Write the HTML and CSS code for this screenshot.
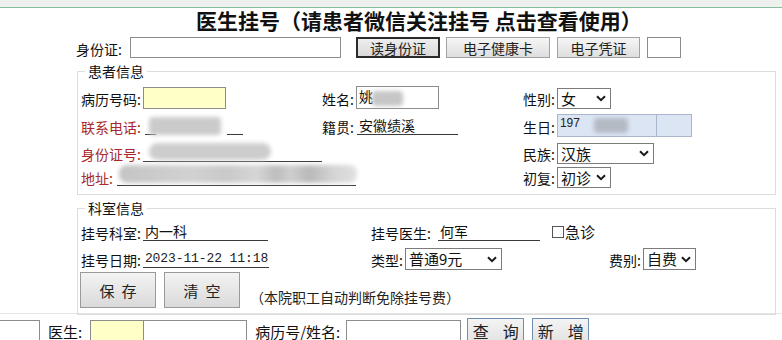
FILE: index.html
```html
<!DOCTYPE html>
<html lang="zh-CN">
<head>
<meta charset="utf-8">
<title>医生挂号</title>
<link rel="stylesheet" href="styles.css">
</head>
<body>
<div class="topbar"></div>
<div class="frame">
  <h1 class="title">医生挂号（请患者微信关注挂号 点击查看使用）</h1>
  <div class="idrow">
    <span class="lbl">身份证:</span>
    <span class="inp id-inp"></span>
    <span class="btn btn-pressed">读身份证</span>
    <span class="btn btn-health">电子健康卡</span>
    <span class="btn btn-cert">电子凭证</span>
    <span class="inp small-box"></span>
  </div>

  <fieldset class="fs fs-patient">
    <legend>患者信息</legend>
    <div class="row r1">
      <div class="col c1"><span class="lbl">病历号码:</span><span class="inp yellow mrn"></span></div>
      <div class="col c2"><span class="lbl">姓名:</span><span class="inp name-inp">姚<i class="blur b-name"></i></span></div>
      <div class="col c3"><span class="lbl">性别:</span><span class="sel sel-sex">女<svg class="chev" viewBox="0 0 10 7" width="10" height="7"><path d="M1 1.2 L5 5.2 L9 1.2" /></svg></span></div>
    </div>
    <div class="row r2">
      <div class="col c1"><span class="lbl red">联系电话:</span><span class="phone"><span class="seg s1"></span><span class="seg s2"></span><i class="blur b-phone"></i></span></div>
      <div class="col c2"><span class="lbl">籍贯:</span><span class="uf native">安徽绩溪</span></div>
      <div class="col c3"><span class="lbl">生日:</span><span class="bday"><span class="bday-a">197<i class="blur b-bday"></i></span><span class="bday-b"></span></span></div>
    </div>
    <div class="row r3">
      <div class="col c1"><span class="lbl red">身份证号:</span><span class="uf idno"><i class="blur b-id"></i></span></div>
      <div class="col c2"></div>
      <div class="col c3"><span class="lbl">民族:</span><span class="sel sel-nation">汉族<svg class="chev" viewBox="0 0 10 7" width="10" height="7"><path d="M1 1.2 L5 5.2 L9 1.2" /></svg></span></div>
    </div>
    <div class="row r4">
      <div class="col c1 addr-col"><span class="lbl red">地址:</span><span class="uf addr"><i class="blur b-addr"></i></span></div>
      <div class="col c3"><span class="lbl">初复:</span><span class="sel sel-visit">初诊<svg class="chev" viewBox="0 0 10 7" width="10" height="7"><path d="M1 1.2 L5 5.2 L9 1.2" /></svg></span></div>
    </div>
  </fieldset>

  <fieldset class="fs fs-dept">
    <legend>科室信息</legend>
    <div class="row d1">
      <div class="col k1"><span class="lbl">挂号科室:</span><span class="uf dept">内一科</span></div>
      <div class="col k2"><span class="lbl">挂号医生:</span><span class="uf doctor">何军</span><span class="check"><span class="box"></span>急诊</span></div>
    </div>
    <div class="row d2">
      <div class="col k1"><span class="lbl">挂号日期:</span><span class="uf date">2023-11-22 11:18</span></div>
      <div class="col k2"><span class="lbl">类型:</span><span class="sel sel-type">普通9元<svg class="chev" viewBox="0 0 10 7" width="10" height="7"><path d="M1 1.2 L5 5.2 L9 1.2" /></svg></span></div>
      <div class="col k3"><span class="lbl">费别:</span><span class="sel sel-fee">自费<svg class="chev" viewBox="0 0 10 7" width="10" height="7"><path d="M1 1.2 L5 5.2 L9 1.2" /></svg></span></div>
    </div>
    <div class="row d3">
      <span class="bigbtn"><span>保</span><span>存</span></span>
      <span class="bigbtn"><span>清</span><span>空</span></span>
      <span class="note">（本院职工自动判断免除挂号费）</span>
    </div>
  </fieldset>
</div>

<div class="bottom">
  <span class="inp edge-box"></span>
  <span class="blbl doc-lbl">医生:</span>
  <span class="inp yellow doc-a"></span>
  <span class="inp doc-b"></span>
  <span class="blbl search-lbl">病历号/姓名:</span>
  <span class="inp search-inp"></span>
  <span class="qbtn"><span>查</span><span>询</span></span>
  <span class="qbtn"><span>新</span><span>增</span></span>
</div>
</body>
</html>
```

FILE: styles.css
```css
* { box-sizing: border-box; }

body {
  margin: 0;
  width: 782px;
  height: 340px;
  overflow: hidden;
  background: #fff;
  color: #111;
  font-family: "Noto Sans CJK SC", "Noto Sans", sans-serif;
  font-size: 14px;
}

.topbar {
  height: 8px;
  background: #eef0ee;
  border-bottom: 1px solid #86bea0;
}

.frame {
  height: 306px;
  border-bottom: 1px solid #e4e4e4;
}

.title {
  margin: 0;
  height: 28px;
  line-height: 24px;
  padding-left: 196px;
  font-size: 21px;
  font-weight: 700;
  color: #111;
  white-space: nowrap;
}

.lbl {
  line-height: 18px;
  white-space: nowrap;
}
.red { color: #a8282c; }

.inp {
  display: inline-block;
  height: 21px;
  border: 1px solid #8c8c8c;
  background: #fff;
}
.yellow { background: #ffffc8; }

/* ID row */
.idrow {
  display: flex;
  align-items: flex-end;
  height: 22px;
  padding-left: 76px;
}
.id-inp { width: 211px; margin-left: 8px; }
.btn {
  display: inline-flex;
  align-items: center;
  justify-content: center;
  height: 21px;
  border: 1px solid #a2a2a2;
  background: linear-gradient(#f6f6f6, #dedede);
  line-height: 18px;
  color: #222;
}
.btn-pressed {
  width: 84px;
  margin-left: 15px;
  border: 2px solid #2a2a2a;
  background: linear-gradient(#eeeeee, #dadada);
}
.btn-health { width: 104px; margin-left: 6px; }
.btn-cert { width: 83px; margin-left: 7px; }
.small-box { width: 34px; margin-left: 7px; }

/* fieldsets */
.fs {
  margin: 5px 0 0 77px;
  width: 699px;
  min-width: 0;
  border: 1px solid #dcdcdc;
  padding: 0 3px 6px 3px;
}
.fs legend {
  margin-left: 4px;
  padding: 0 3px;
  line-height: 16px;
  font-size: 14px;
  color: #111;
}

.row {
  display: flex;
  align-items: flex-end;
  height: 22px;
}
.col {
  display: flex;
  align-items: flex-end;
  flex: none;
}
.c1 { width: 241px; }
.c2 { width: 201px; }
.c3 { flex: 1; }

.r1 { margin-top: 8px; }
.r2 { margin-top: 5px; height: 23px; }
.r3 { margin-top: 5px; }
.r4 { margin-top: 2px; }
.addr-col { width: 442px; }

.fs-patient .lbl { margin-bottom: 1px; }

.mrn { width: 83px; height: 22px; margin-left: 2px; }
.name-inp {
  position: relative;
  width: 83px;
  height: 23px;
  margin-left: 2px;
  padding-left: 2px;
  line-height: 19px;
  font-size: 14px;
}

.sel {
  display: inline-flex;
  align-items: center;
  justify-content: space-between;
  height: 21px;
  border: 1px solid #7c7c7c;
  background: #fff;
  padding: 0 4px 0 3px;
  line-height: 18px;
  font-size: 15px;
  margin-left: 2px;
}
.chev { flex: none; }
.chev path {
  fill: none;
  stroke: #1a1a1a;
  stroke-width: 2;
}
.sel-sex { width: 54px; }
.sel-nation { width: 97px; }
.sel-visit { width: 54px; }
.sel-type { width: 97px; height: 22px; }
.sel-fee { width: 53px; height: 22px; }

.uf {
  display: inline-block;
  position: relative;
  height: 18px;
  line-height: 17px;
  border-bottom: 1px solid #3a3a3a;
  margin-bottom: 2px;
  margin-left: 2px;
  padding-left: 2px;
  white-space: nowrap;
}

.phone {
  position: relative;
  display: flex;
  align-items: flex-end;
  width: 100px;
  height: 18px;
  margin-left: 2px;
  margin-bottom: 2px;
}
.seg { display: block; height: 1px; background: #3a3a3a; }
.s1 { width: 11px; margin-left: 2px; }
.s2 { width: 16px; margin-left: 71px; }

.native { width: 101px; margin-left: 3px; }

.bday {
  display: flex;
  height: 23px;
  margin-left: 2px;
}
.bday-a, .bday-b {
  display: block;
  position: relative;
  height: 23px;
  background: #dbe5f4;
  border: 1px solid #a9b6cb;
}
.bday-a {
  width: 100px;
  padding: 1px 0 0 2px;
  font-family: "Liberation Sans", Arial, sans-serif;
  font-size: 12px;
  line-height: 14px;
  color: #222;
}
.bday-b { width: 35px; border-left: none; }

.idno { width: 239px; }
.addr { width: 239px; margin-left: 4px; }

/* blurred, anonymised data */
.blur {
  position: absolute;
  display: block;
  background: #c6c6c6;
  filter: blur(2px);
  border-radius: 4px;
}
.b-name { left: 15px; top: 4px; width: 31px; height: 15px; }
.b-phone { left: 6px; top: 0; width: 72px; height: 18px; background: #cbcbcb; }
.b-bday { left: 36px; top: 3px; width: 34px; height: 15px; background: #b4bac4; }
.b-id { left: 6px; top: -1px; width: 122px; height: 17px; border-radius: 9px; background: #cdcdcd; }
.b-addr {
  left: 2px; top: -3px; width: 238px; height: 18px;
  border-radius: 8px;
  background: linear-gradient(90deg, #c4c4c4 0, #d2d2d2 30%, #c9c9c9 45%, #d6d6d6 58%, #bdbdbd 66%, #cfcfcf 72%, #b9b9b9 80%, #d4d4d4 90%, #e0e0e0 100%);
}

/* dept fieldset */
.k1 { width: 290px; }
.k2 { width: 238px; }
.k3 { flex: 1; }
.d1 { margin-top: 5px; }
.d2 { margin-top: 5px; }
.d3 { margin-top: 2px; height: 36px; }

.fs-dept .lbl { margin-bottom: 1px; }
.dept { width: 125px; }
.doctor { width: 102px; margin-left: 7px; }
.date {
  width: 126px;
  font-family: "Liberation Mono", monospace;
  font-size: 13px;
  letter-spacing: -0.1px;
  color: #222;
}
.check {
  display: inline-flex;
  align-items: center;
  margin-left: 12px;
  margin-bottom: 2px;
  line-height: 18px;
  font-size: 15px;
}
.check .box {
  display: inline-block;
  width: 12px;
  height: 12px;
  border: 1px solid #555;
  margin-right: 1px;
}

.bigbtn {
  display: inline-flex;
  align-items: center;
  justify-content: center;
  gap: 7px;
  width: 76px;
  height: 36px;
  margin-left: -1px;
  margin-right: 9px;
  border: 1px solid #9a9a9a;
  background: linear-gradient(#f3f3f3, #dadada);
  font-size: 15px;
  color: #222;
}
.bigbtn + .bigbtn { margin-left: -1px; }
.note {
  margin-left: 1px;
  margin-bottom: 2px;
  line-height: 18px;
  font-size: 14px;
  color: #222;
  white-space: nowrap;
}

/* bottom row */
.bottom {
  display: flex;
  align-items: flex-start;
  height: 26px;
  padding-top: 4px;
}
.edge-box {
  width: 41px;
  height: 24px;
  margin-top: 2px;
  margin-left: -1px;
}
.blbl {
  margin-top: 3px;
  font-size: 15px;
  line-height: 22px;
  white-space: nowrap;
}
.doc-lbl { margin-left: 8px; }
.doc-a { width: 54px; height: 24px; margin-top: 2px; margin-left: 8px; }
.doc-b { width: 104px; height: 24px; margin-top: 2px; margin-left: -1px; }
.search-lbl { margin-left: 8px; }
.search-inp { width: 115px; height: 24px; margin-top: 2px; margin-left: 6px; }
.qbtn {
  display: inline-flex;
  justify-content: center;
  gap: 14px;
  width: 57px;
  height: 26px;
  margin-left: 6px;
  padding-top: 2px;
  border: 1px solid #6f8fb2;
  background: linear-gradient(#f4f4f4, #e2e2e2);
  font-size: 16px;
  line-height: 20px;
  color: #222;
}
.qbtn + .qbtn { margin-left: 8px; }
```
